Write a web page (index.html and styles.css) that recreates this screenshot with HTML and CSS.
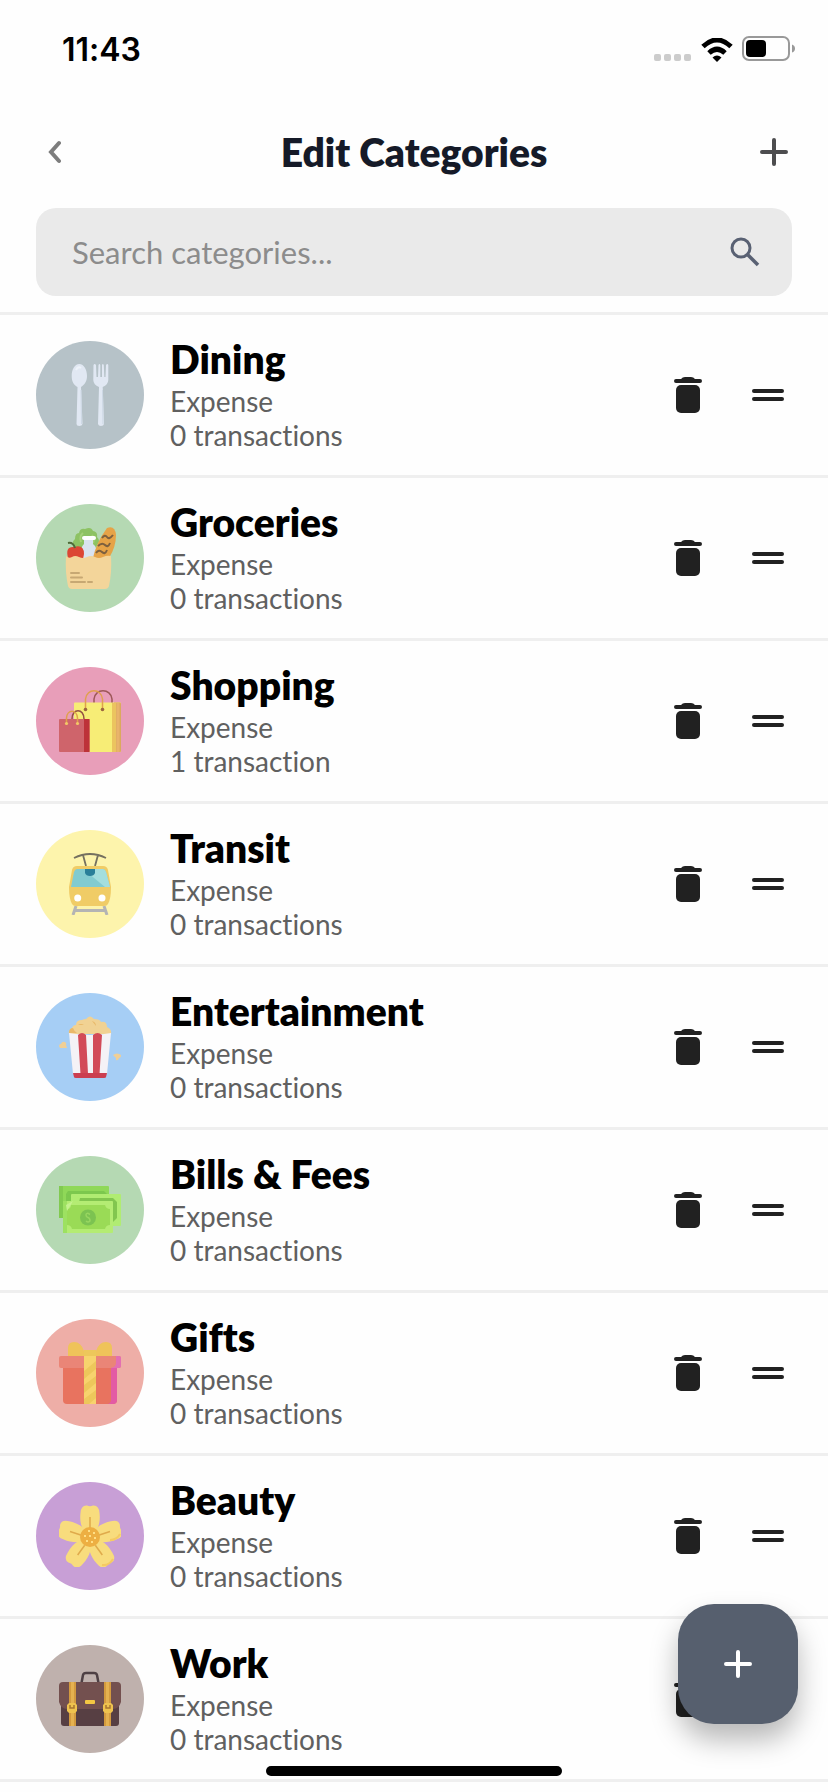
FILE: index.html
```html
<!DOCTYPE html>
<html lang="en">

<head>
    <meta charset="UTF-8">
    <meta name="viewport" content="width=device-width, initial-scale=1">
    <title>Edit Categories</title>
    <link rel="stylesheet" href="styles.css">
</head>

<body>
    <!-- shared icons -->
    <svg class="sprite" aria-hidden="true">
        <symbol id="trash" viewBox="0 0 28 36">
            <path d="M2 2H7Q8.500 0 11 0H17Q19.500 0 21 2H26A2 2 0 0 1 26 6H2A2 2 0 0 1 2 2Z" />
            <rect x="2" y="8" width="24" height="28" rx="5" />
        </symbol>
        <symbol id="drag" viewBox="0 0 32 12">
            <rect width="32" height="4" rx="2" />
            <rect y="8" width="32" height="4" rx="2" />
        </symbol>
        <symbol id="plus" viewBox="0 0 28 28">
            <path d="M14 2V26M2 14H26" fill="none" stroke="currentColor" stroke-width="4" stroke-linecap="round" />
        </symbol>
    </svg>

    <div class="status-bar">
        <span class="time">11:43</span>
        <div class="status-icons">
            <svg class="signal" viewBox="0 0 38 8" aria-hidden="true">
                <rect width="7" height="7" rx="2" />
                <rect x="10" width="7" height="7" rx="2" />
                <rect x="20" width="7" height="7" rx="2" />
                <rect x="30" width="7" height="7" rx="2" />
            </svg>
            <svg class="wifi" viewBox="0 0 32 24" aria-hidden="true">
                <path d="M2 8.500Q16 -4.500 30 8.500M8 15Q16 7.500 24 15" fill="none" stroke="#000" stroke-width="5" />
                <path d="M16 24L11.500 19.500Q16 15.500 20.500 19.500Z" />
            </svg>
            <svg class="battery" viewBox="0 0 54 26" aria-hidden="true">
                <rect x="1" y="1" width="46" height="23" rx="6" fill="none" stroke="#999" stroke-width="2" />
                <rect x="4" y="4" width="20" height="17" rx="4" />
                <path d="M50 8.500Q53 9.500 53 12.500T50 16.500Z" fill="#999" />
            </svg>
        </div>
    </div>

    <header class="header">
        <button class="icon-btn back" aria-label="Back">
            <svg class="chevron" viewBox="0 0 14 24">
                <path d="M12 3L4 12L12 21" fill="none" stroke="currentColor" stroke-width="4" stroke-linecap="round" />
            </svg>
        </button>
        <h1 class="title">Edit Categories</h1>
        <button class="icon-btn add" aria-label="Add category">
            <svg class="plus"><use href="#plus" /></svg>
        </button>
    </header>

    <form class="search">
        <input class="search-input" type="text" placeholder="Search categories..." aria-label="Search categories">
        <button class="search-btn" type="button" aria-label="Search">
            <svg class="search-icon" viewBox="0 0 30 30">
                <path d="M18 18L28 28" stroke="currentColor" stroke-width="3.500" />
                <circle cx="11" cy="11" r="9" fill="none" stroke="currentColor" stroke-width="3" />
            </svg>
        </button>
    </form>

    <ul class="categories">
        <li class="category">
            <div class="avatar dining">
                <svg viewBox="0 0 62 62" aria-hidden="true">
                    <g fill="#e1e8f3">
                        <path d="M20.300 0C25 0 28 6 28 12C28 18 25 21 22 23L23.500 60Q23 62 20.300 62T17.500 60L18.500 23C15 21 12.700 18 12.700 12C12.700 6 15.500 0 20.300 0Z" />
                        <path d="M34.500 1Q35.500 -1 37 1L37.500 13H39L39.500 1Q40.500 -1 41.300 1V13H43V1Q43.800 -1 44.800 1L45.300 13H46.500L47 1Q48.500 -1 49.300 1V16Q49 21 43.700 23L45 60Q44.500 62 42 62T39 60L40 23Q34.500 21 34.300 16Z" />
                    </g>
                    <path d="M17 6Q19 2 22 4" fill="none" stroke="#eef3fa" stroke-width="2" />
                    <path d="M22 26L22.500 60M43.500 26L44 60" fill="none" stroke="#cdd8e5" stroke-width="1" />
                </svg>
            </div>
            <div class="info">
                <h2 class="name">Dining</h2>
                <p class="detail">Expense</p>
                <p class="detail">0 transactions</p>
            </div>
            <button class="row-btn" aria-label="Delete Dining"><svg class="trash"><use href="#trash" /></svg></button>
            <button class="row-btn" aria-label="Reorder Dining"><svg class="drag"><use href="#drag" /></svg></button>
        </li>

        <li class="category">
            <div class="avatar groceries">
                <svg viewBox="0 0 62 62" aria-hidden="true">
                    <path d="M15 20Q12 15 16 12Q16 6 20 6Q21 1 26 2Q32 -1 34 4Q39 5 38 10Q42 14 38 18L36 24H17Z" fill="#8dc263" />
                    <path d="M22 15Q20 9 24 6M33 8Q36 12 34 16" stroke="#a4d178" stroke-width="2" fill="none" />
                    <path d="M25 13H34V17Q39 20 38 32H22Q21 20 25 17Z" fill="#d9e3f0" />
                    <rect x="23" y="9" width="14" height="4" rx="2" fill="#fff" />
                    <path d="M48 1Q56 -2 57 8Q57 20 50 31H34Q37 16 48 1Z" fill="#e6a347" />
                    <path d="M43 11Q46 7 48 10T54 8M39 19Q43 15 46 18T51 16M37 26Q40 22 43 25T48 23" fill="none" stroke="#7d603e" stroke-width="2" />
                    <path d="M9 31Q6 19 15 20Q25 17 25 27L24 32H9Z" fill="#dc4634" />
                    <path d="M9 16Q14 15 16 21" fill="none" stroke="#4e6b39" stroke-width="2" />
                    <path d="M7 29Q10 32 13 30T20 30T28 30T36 30T44 30T52 29Q53 45 50 59Q49 62 46 62H13Q10 62 9 59Q6 45 7 29Z" fill="#f3d59a" />
                    <path d="M12 46H20M12 50.500H23M12 55H26M29 55H33" stroke="#c7a873" stroke-width="2" stroke-linecap="round" />
                </svg>
            </div>
            <div class="info">
                <h2 class="name">Groceries</h2>
                <p class="detail">Expense</p>
                <p class="detail">0 transactions</p>
            </div>
            <button class="row-btn" aria-label="Delete Groceries"><svg class="trash"><use href="#trash" /></svg></button>
            <button class="row-btn" aria-label="Reorder Groceries"><svg class="drag"><use href="#drag" /></svg></button>
        </li>

        <li class="category">
            <div class="avatar shopping">
                <svg viewBox="0 0 62 62" aria-hidden="true">
                    <path d="M35 14V9C36 -2 52 -2 53 9V14" fill="none" stroke="#9c5757" stroke-width="1.500" />
                    <rect x="15" y="12.500" width="47" height="49.500" rx="1" fill="#f7ed76" />
                    <path d="M55 12.500H61Q62 12.500 62 14V61Q62 62 61 62H55Z" fill="#dba95e" />
                    <path d="M59 13V62" stroke="#e9b36b" stroke-width="3" />
                    <path d="M53 13H57V62H53Z" fill="#ebc45f" />
                    <path d="M26.500 19V9C28 -2 42 -2 43.500 9V19" fill="none" stroke="#e0a04d" stroke-width="1.500" />
                    <circle cx="26.500" cy="19.500" r="1.800" fill="#9a6540" />
                    <circle cx="43.500" cy="19.500" r="1.800" fill="#9a6540" />
                    <rect y="29" width="30.500" height="33" rx="1" fill="#cf646b" />
                    <path d="M25 29H30.500V62H25Z" fill="#bd3239" />
                    <path d="M13 29C13 18 25 18 25 29" fill="none" stroke="#935044" stroke-width="1.500" />
                    <path d="M7.500 33V28C8 19 18 19 18.500 28V33" fill="none" stroke="#e0a04d" stroke-width="1.500" />
                    <circle cx="7.500" cy="33.500" r="1.600" fill="#f3c868" />
                    <circle cx="18.500" cy="33.500" r="1.600" fill="#f3c868" />
                </svg>
            </div>
            <div class="info">
                <h2 class="name">Shopping</h2>
                <p class="detail">Expense</p>
                <p class="detail">1 transaction</p>
            </div>
            <button class="row-btn" aria-label="Delete Shopping"><svg class="trash"><use href="#trash" /></svg></button>
            <button class="row-btn" aria-label="Reorder Shopping"><svg class="drag"><use href="#drag" /></svg></button>
        </li>

        <li class="category">
            <div class="avatar transit">
                <svg viewBox="0 0 62 62" aria-hidden="true">
                    <path d="M15 5Q31 -3 47 5M24 2L27 13M39 2L36 13" fill="none" stroke="#75705f" stroke-width="1.800" />
                    <path d="M17 53L14 62M45 53L48 62M15 57.500H47" fill="none" stroke="#b4b4b4" stroke-width="3" />
                    <path d="M18 13H44Q48 13 49 17L52 34Q52 46 49 51Q48 53 45 53H17Q14 53 13 51Q10 46 10 34L13 17Q14 13 18 13Z" fill="#f0cc66" />
                    <path d="M18 16H44Q46 16 47 19L51 34H12L15 19Q16 16 18 16Z" fill="#82cbd0" />
                    <path d="M29 20L46 34H51L47 19Q46 16 44 16H34Z" fill="#a4dedd" />
                    <path d="M26 16H36V20Q35 23 31 23T26 20Z" fill="#297f99" />
                    <circle cx="18.700" cy="45" r="3.500" fill="#fff" />
                    <circle cx="43" cy="45" r="3.500" fill="#fff" />
                </svg>
            </div>
            <div class="info">
                <h2 class="name">Transit</h2>
                <p class="detail">Expense</p>
                <p class="detail">0 transactions</p>
            </div>
            <button class="row-btn" aria-label="Delete Transit"><svg class="trash"><use href="#trash" /></svg></button>
            <button class="row-btn" aria-label="Reorder Transit"><svg class="drag"><use href="#drag" /></svg></button>
        </li>

        <li class="category">
            <div class="avatar entertainment">
                <svg viewBox="0 0 62 62" aria-hidden="true">
                    <path d="M10 18Q9 14 13 12Q14 9 17 9Q17 4 23 4Q25 3 27 3Q31 -2 35 3Q41 3 42 6Q48 5 48 11Q53 13 52 18Z" fill="#f1d293" />
                    <path d="M10 17Q10 12 14 12Q15 15 18 17ZM19 9Q22 7 25 9M33 5Q37 6 37 10" fill="#e9b96a" />
                    <path d="M10 17Q31 21 52 17L48 58H14Z" fill="#f4f2f6" />
                    <path d="M19 19Q23 15 27 19L29 58H21.500ZM34 19Q38.500 15 43 19L40.500 58H34Z" fill="#d24a58" />
                    <path d="M14 57H48L47 61Q47 62 45 62H17Q15 62 15 61Z" fill="#cb3e50" />
                    <path d="M0 30Q0 28 2 28Q3 25 6 26Q8 27 7 29L8 32H1ZM54 39Q58 36 62 39Q62 42 60 42Q59 45 57 44L57 42Z" fill="#f0cf96" />
                </svg>
            </div>
            <div class="info">
                <h2 class="name">Entertainment</h2>
                <p class="detail">Expense</p>
                <p class="detail">0 transactions</p>
            </div>
            <button class="row-btn" aria-label="Delete Entertainment"><svg class="trash"><use href="#trash" /></svg></button>
            <button class="row-btn" aria-label="Reorder Entertainment"><svg class="drag"><use href="#drag" /></svg></button>
        </li>

        <li class="category">
            <div class="avatar bills">
                <svg viewBox="0 0 62 62" aria-hidden="true">
                    <rect y="7" width="50" height="32" rx="1" fill="#8fd858" />
                    <path d="M0 7H4V39H0Z" fill="#81ca50" />
                    <path d="M9 12H45L48 15V20H7V15Z" fill="#7cc84e" />
                    <path d="M7 15V33L12 36V19Z" fill="#7cc84e" />
                    <rect x="12" y="15" width="50" height="32" rx="1" fill="#b0ec72" />
                    <path d="M21 19H54L58 23V39L54 43V26L20 23Z" fill="#82c64f" />
                    <rect x="4" y="22" width="50" height="32" rx="1" fill="#b4ec73" />
                    <path d="M4 22H8V54H4Z" fill="#9de161" />
                    <path d="M12 26H46Q47 30 51 30V46Q47 46 46 50H13Q12 46 8 46V30Q12 30 12 26Z" fill="#9adb56" />
                    <circle cx="29" cy="38.500" r="8" fill="#7cc351" />
                    <path d="M31 35.500Q27 33 27 36Q27 38 29 38.500T31 42Q29 44 27 42" fill="none" stroke="#98d660" stroke-width="1.500" />
                    <path d="M7 26L14 22L8 32Z" fill="#c5f290" />
                </svg>
            </div>
            <div class="info">
                <h2 class="name">Bills &amp; Fees</h2>
                <p class="detail">Expense</p>
                <p class="detail">0 transactions</p>
            </div>
            <button class="row-btn" aria-label="Delete Bills &amp; Fees"><svg class="trash"><use href="#trash" /></svg></button>
            <button class="row-btn" aria-label="Reorder Bills &amp; Fees"><svg class="drag"><use href="#drag" /></svg></button>
        </li>

        <li class="category">
            <div class="avatar gifts">
                <svg viewBox="0 0 62 62" aria-hidden="true">
                    <path d="M9 14V6Q9 0 15 0Q22 0 25 9V14ZM37 14V9Q40 0 47 0Q53 0 53 6V14Z" fill="#efc35a" />
                    <path d="M4 25H58V58Q58 62 54 62H8Q4 62 4 58Z" fill="#e8735f" />
                    <path d="M52 25H58V58Q58 62 54 62H48Q52 62 52 57Z" fill="#e35ba4" />
                    <rect y="14" width="62" height="12" rx="2" fill="#ea8577" />
                    <path d="M57 14H60Q62 14 62 16V24Q62 26 60 26H52Q57 25 57 21Z" fill="#e36fb3" />
                    <rect x="25" y="8" width="12" height="54" fill="#f7d36d" />
                    <path d="M25 8H37V14H25ZM25 29L37 19V27L25 37ZM25 43L37 34V41L25 51ZM25 57L37 48V56L30 62H25Z" fill="#edc75b" />
                </svg>
            </div>
            <div class="info">
                <h2 class="name">Gifts</h2>
                <p class="detail">Expense</p>
                <p class="detail">0 transactions</p>
            </div>
            <button class="row-btn" aria-label="Delete Gifts"><svg class="trash"><use href="#trash" /></svg></button>
            <button class="row-btn" aria-label="Reorder Gifts"><svg class="drag"><use href="#drag" /></svg></button>
        </li>

        <li class="category">
            <div class="avatar beauty">
                <svg viewBox="0 0 62 62" aria-hidden="true">
                    <defs>
                        <g id="petal">
                            <path d="M31 36C25 28 20 20 21.500 8Q22 0 28 0.500Q31 2 34 0.500Q40 0 40.500 8C42 20 37 28 31 36Z" fill="#f8dc7d" />
                            <path d="M31 12V24" stroke="#dfaa4b" stroke-width="1.500" />
                        </g>
                    </defs>
                    <use href="#petal" />
                    <use href="#petal" transform="rotate(72 31 33)" />
                    <use href="#petal" transform="rotate(144 31 33)" />
                    <use href="#petal" transform="rotate(216 31 33)" />
                    <use href="#petal" transform="rotate(288 31 33)" />
                    <path d="M61 29Q58 35 51 35M54 54Q50 61 43 60" fill="none" stroke="#f5ca62" stroke-width="2" />
                    <circle cx="31" cy="32" r="10" fill="#edaf42" />
                    <path d="M25 31H27M29 26H31M34 28H36M30 31H32M35 33H37M27 36H29M32 37H34" stroke="#ffdf85" stroke-width="2" />
                </svg>
            </div>
            <div class="info">
                <h2 class="name">Beauty</h2>
                <p class="detail">Expense</p>
                <p class="detail">0 transactions</p>
            </div>
            <button class="row-btn" aria-label="Delete Beauty"><svg class="trash"><use href="#trash" /></svg></button>
            <button class="row-btn" aria-label="Reorder Beauty"><svg class="drag"><use href="#drag" /></svg></button>
        </li>

        <li class="category">
            <div class="avatar work">
                <svg viewBox="0 0 62 62" aria-hidden="true">
                    <path d="M22.500 15L24 7Q24.500 5 27 5H35Q37.500 5 38 7L39.500 15" fill="none" stroke="#4e4044" stroke-width="2.500" />
                    <path d="M2 34H60V55Q60 58 57 58H5Q2 58 2 55Z" fill="#573f43" />
                    <path d="M4 14H58Q62 14 62 18V34Q60 41 54 41H8Q2 41 0 34V18Q0 14 4 14Z" fill="#73504f" />
                    <path d="M10 14H17V58H10ZM45 14H52V58H45Z" fill="#d39a3e" />
                    <path d="M12 14H15V58H12ZM47 14H50V58H47Z" fill="#e5b150" />
                    <path d="M10 35H16L18 37V43L16 45H10L8 43V37ZM46 35H52L54 37V43L52 45H46L44 43V37Z" fill="#efc24e" />
                    <path d="M11 37V40H15V37M47 37V40H51V37" fill="none" stroke="#a87531" stroke-width="1.500" />
                    <rect x="26" y="32" width="10" height="4" rx="1" fill="#f3c743" />
                </svg>
            </div>
            <div class="info">
                <h2 class="name">Work</h2>
                <p class="detail">Expense</p>
                <p class="detail">0 transactions</p>
            </div>
            <button class="row-btn" aria-label="Delete Work"><svg class="trash"><use href="#trash" /></svg></button>
            <button class="row-btn" aria-label="Reorder Work"><svg class="drag"><use href="#drag" /></svg></button>
        </li>
    </ul>

    <button class="fab" aria-label="New category">
        <svg class="plus"><use href="#plus" /></svg>
    </button>
    <div class="home-indicator"></div>
</body>

</html>
```

FILE: styles.css
```css
* {
    box-sizing: border-box;
}

body {
    margin: 0;
    background-color: #fefefe;
    font-family: Lato, "Liberation Sans", sans-serif;
    font-variant-ligatures: none;
    color: #000;
}

button {
    display: flex;
    align-items: center;
    justify-content: center;
    padding: 0;
    border: none;
    background: none;
    cursor: pointer;
}

.sprite {
    display: none;
}

/* status bar */
.status-bar {
    display: flex;
    justify-content: space-between;
    height: 100px;
    padding: 30px 32px 0 62px;
}

.time {
    font-family: Inter, sans-serif;
    font-size: 32px;
    font-weight: 600;
    line-height: 40px;
}

.status-icons {
    display: flex;
    align-items: flex-end;
    gap: 9px;
    height: 32px;
}

.signal {
    width: 38px;
    height: 8px;
    fill: #ccc;
}

.wifi {
    width: 32px;
    height: 24px;
}

.battery {
    width: 54px;
    height: 26px;
}

/* header */
.header {
    display: flex;
    align-items: center;
    justify-content: space-between;
    height: 108px;
    padding: 0 34px 4px;
}

.icon-btn {
    width: 40px;
    height: 48px;
}

.back {
    color: #7d7d7d;
}

.chevron {
    width: 14px;
    height: 24px;
}

.add {
    color: #4d4d4f;
}

.plus {
    width: 28px;
    height: 28px;
}

.title {
    margin: 0;
    font-size: 39px;
    font-weight: 800;
    line-height: 42px;
    color: #151a28;
}

/* search */
.search {
    display: flex;
    align-items: center;
    height: 88px;
    margin: 0 36px 16px;
    padding: 0 32px 0 36px;
    border-radius: 20px;
    background-color: #eaeaea;
}

.search-input {
    flex: 1;
    min-width: 0;
    padding: 0;
    border: none;
    outline: none;
    background: none;
    font-family: inherit;
    font-size: 31px;
    color: #333;
}

.search-input::placeholder {
    color: #8c8c8c;
}

.search-btn {
    color: #596173;
}

.search-icon {
    width: 30px;
    height: 30px;
}

/* category list */
.categories {
    margin: 0;
    padding: 0 0 10px;
    border-top: 3px solid #efefef;
    list-style: none;
}

.category {
    display: flex;
    align-items: center;
    min-height: 163px;
    padding: 0 28px 0 36px;
    border-bottom: 3px solid #efefef;
}

.avatar {
    display: flex;
    align-items: center;
    justify-content: center;
    width: 108px;
    height: 108px;
    margin-right: 26px;
    border-radius: 50%;
}

.avatar svg {
    width: 62px;
    height: 62px;
}

.dining {
    background-color: #b6c2c8;
}

.groceries,
.bills {
    background-color: #b5d9b3;
}

.shopping {
    background-color: #e89eb9;
}

.transit {
    background-color: #fdf4ac;
}

.entertainment {
    background-color: #a6cef5;
}

.gifts {
    background-color: #eeaea7;
}

.beauty {
    background-color: #c89fd6;
}

.work {
    background-color: #bfb1ad;
}

.info {
    flex: 1;
}

.name {
    margin: 0 0 4px;
    font-size: 39px;
    font-weight: 800;
    line-height: 42px;
}

.detail {
    margin: 0;
    font-size: 28px;
    line-height: 34px;
    color: #606060;
}

.row-btn {
    width: 64px;
    height: 64px;
    margin-left: 16px;
}

.trash {
    width: 28px;
    height: 36px;
    fill: #212121;
}

.drag {
    width: 32px;
    height: 12px;
    fill: #212121;
}

/* floating button */
.fab {
    position: fixed;
    right: 30px;
    bottom: 68px;
    width: 120px;
    height: 120px;
    border-radius: 36px;
    background-color: #565f6e;
    box-shadow: 0 16px 28px rgba(0, 0, 0, 0.28);
    color: #fff;
}

.home-indicator {
    position: fixed;
    bottom: 16px;
    left: 50%;
    width: 296px;
    height: 10px;
    margin-left: -148px;
    border-radius: 5px;
    background-color: #000;
}
```
